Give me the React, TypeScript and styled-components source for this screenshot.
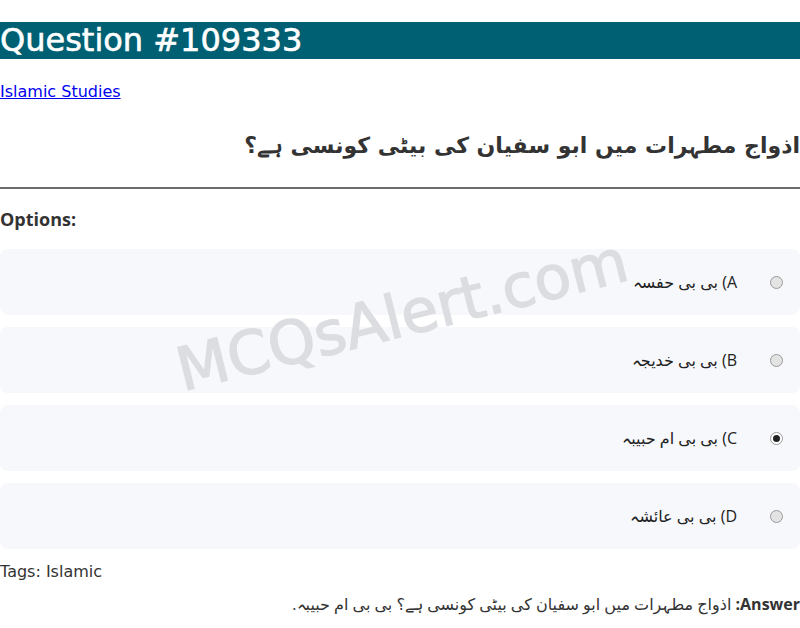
import React from "react";
import styled, { createGlobalStyle } from "styled-components";

const Global = createGlobalStyle`
  html, body { margin: 0; padding: 0; background: #fff; }
  body { font-family: "DejaVu Sans", sans-serif; color: #333; }
`;

const Page = styled.div`
  position: relative;
  overflow: hidden;
  padding-bottom: 12px;
`;

const Banner = styled.h1`
  margin: 22px 0 23px;
  background: #006073;
  color: #fff;
  font-family: "DejaVu Sans", sans-serif;
  font-weight: normal;
  font-size: 32px;
  line-height: 37px;
  -webkit-text-stroke: 0.6px #fff;
`;

const CategoryLink = styled.a`
  display: block;
  font-size: 16px;
  line-height: 19px;
  color: #0000ee;
  text-decoration: underline;
`;

const QuestionTitle = styled.h2`
  direction: rtl;
  margin: 30px 0 0;
  font-family: "DejaVu Sans", sans-serif;
  font-size: 22px;
  line-height: 30px;
  font-weight: bold;
  color: #333;
`;

const Rule = styled.hr`
  margin: 26px 0 0;
  border: none;
  border-top: 2px solid #6b6b6b;
  height: 0;
`;

const OptionsLabel = styled.h3`
  margin: 18px 0 17px;
  font-family: "Open Sans", "Noto Sans", sans-serif;
  font-weight: 700;
  font-size: 18px;
  line-height: 25px;
  color: #333;
`;

const OptionList = styled.div`
  display: flex;
  flex-direction: column;
  gap: 12px;
`;

const OptionRow = styled.label`
  direction: rtl;
  display: flex;
  align-items: center;
  gap: 33px;
  height: 66px;
  padding: 0 17px;
  background: #f7f8fc;
  border-radius: 8px;
  font-size: 16px;
  color: #222;
`;

const Radio = styled.span<{ $checked?: boolean }>`
  width: 13px;
  height: 13px;
  box-sizing: border-box;
  border-radius: 50%;
  border: 1px solid #9a9a9a;
  background: ${(p) => (p.$checked ? "#fff" : "#e3e3e3")};
  display: flex;
  align-items: center;
  justify-content: center;
  flex: none;
  &::after {
    content: "";
    display: ${(p) => (p.$checked ? "block" : "none")};
    width: 7px;
    height: 7px;
    border-radius: 50%;
    background: #222;
  }
`;

const OptionText = styled.span`
  font-family: "Open Sans", "DejaVu Sans", sans-serif;
`;

const Tags = styled.div`
  margin-top: 13px;
  font-size: 16px;
  line-height: 20px;
  color: #333;
`;

const Answer = styled.p`
  direction: rtl;
  margin: 11px 0 0;
  font-family: "Open Sans", "DejaVu Sans", sans-serif;
  font-size: 16px;
  line-height: 22px;
  color: #333;
`;

const Watermark = styled.div`
  position: absolute;
  left: 402px;
  top: 315px;
  transform: translate(-50%, -50%) rotate(-14deg);
  font-family: "DejaVu Sans", sans-serif;
  font-weight: normal;
  font-size: 60px;
  color: #dcdde1;
  -webkit-text-stroke: 1.4px #dcdde1;
  white-space: nowrap;
  pointer-events: none;
`;

const options = [
  { key: "A", text: "بی بی حفسہ", checked: false },
  { key: "B", text: "بی بی خدیجہ", checked: false },
  { key: "C", text: "بی بی ام حبیبہ", checked: true },
  { key: "D", text: "بی بی عائشہ", checked: false },
];

export default function App() {
  return (
    <Page>
      <Global />
      <Banner>Question #109333</Banner>
      <CategoryLink href="#">Islamic Studies</CategoryLink>
      <QuestionTitle>اذواج مطہرات میں ابو سفیان کی بیٹی کونسی ہے؟</QuestionTitle>
      <Rule />
      <OptionsLabel>Options:</OptionsLabel>
      <OptionList>
        {options.map((o) => (
          <OptionRow key={o.key}>
            <Radio $checked={o.checked} />
            <OptionText>{`${o.key}) ${o.text}`}</OptionText>
          </OptionRow>
        ))}
      </OptionList>
      <Tags>Tags: Islamic</Tags>
      <Answer>
        <strong>Answer:</strong> اذواج مطہرات میں ابو سفیان کی بیٹی کونسی ہے؟ بی بی ام حبیبہ.
      </Answer>
      <Watermark>MCQsAlert.com</Watermark>
    </Page>
  );
}
